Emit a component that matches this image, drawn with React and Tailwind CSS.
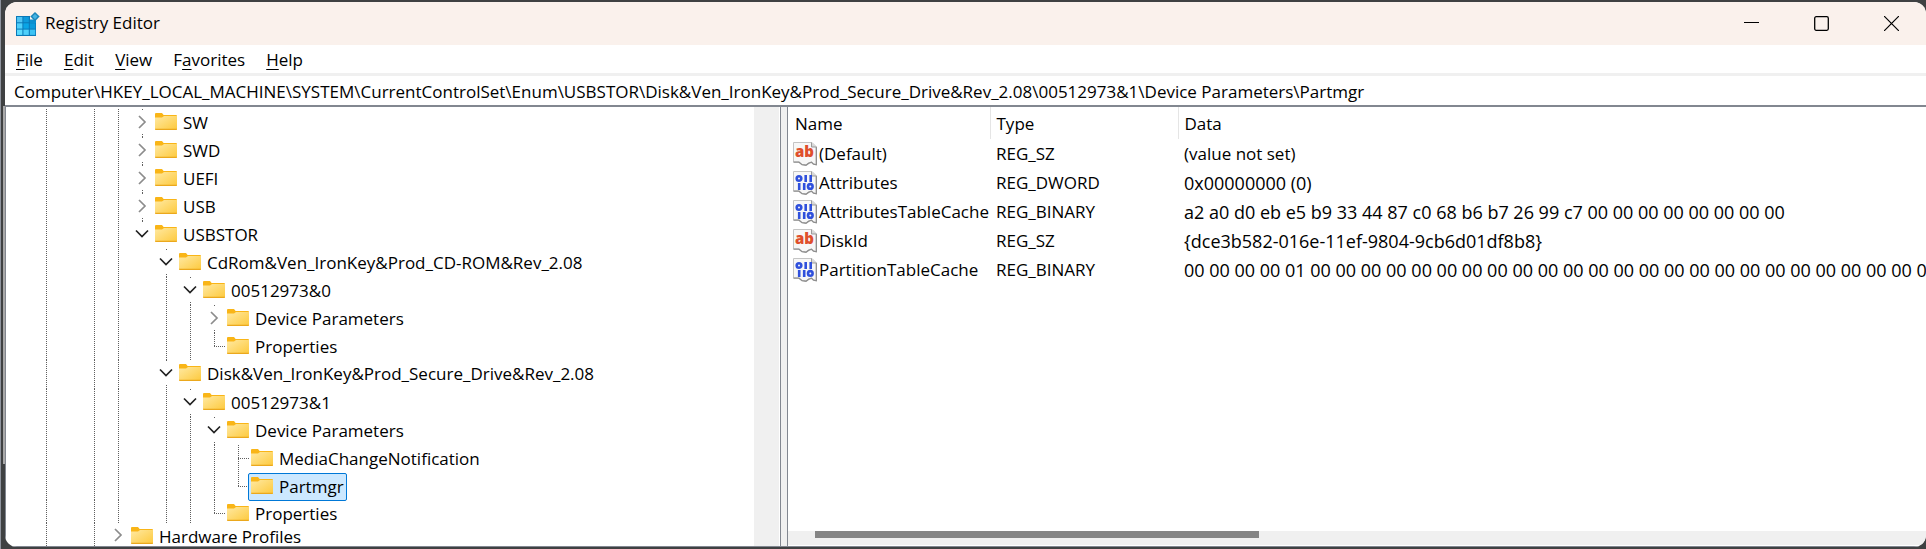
import React from "react";

const FULL = "h-7";

// guides: one character per indent column, "|" draws a dotted line, "." leaves it empty
const ROWS = [
  { label: "SW", guides: "|.||", state: "closed", size: FULL },
  { label: "SWD", guides: "|.||", state: "closed", size: FULL },
  { label: "UEFI", guides: "|.||", state: "closed", size: FULL },
  { label: "USB", guides: "|.||", state: "closed", size: FULL },
  { label: "USBSTOR", guides: "|.||", state: "open", end: true, size: FULL },
  { label: "CdRom&Ven_IronKey&Prod_CD-ROM&Rev_2.08", guides: "|.||.", state: "open", size: FULL },
  { label: "00512973&0", guides: "|.||.|", state: "open", size: FULL },
  { label: "Device Parameters", guides: "|.||.||", state: "closed", size: FULL },
  { label: "Properties", guides: "|.||.||", state: "leaf", end: true, size: "h-[27px]" },
  { label: "Disk&Ven_IronKey&Prod_Secure_Drive&Rev_2.08", guides: "|.||.", state: "open", size: "h-[29px]" },
  { label: "00512973&1", guides: "|.||.|", state: "open", size: FULL },
  { label: "Device Parameters", guides: "|.||.||", state: "open", size: FULL },
  { label: "MediaChangeNotification", guides: "|.||.|||", state: "leaf", size: FULL },
  { label: "Partmgr", guides: "|.||.|||", state: "leaf", end: true, selected: true, size: "h-[27px]" },
  { label: "Properties", guides: "|.||.||", state: "leaf", end: true, size: "h-[23px]" },
  { label: "Hardware Profiles", guides: "|.|", state: "closed", end: true, size: "h-[23px]" },
];

const VALUES = [
  { kind: "text", name: "(Default)", type: "REG_SZ", data: "(value not set)", unset: true },
  { kind: "binary", name: "Attributes", type: "REG_DWORD", data: "0x00000000 (0)" },
  {
    kind: "binary",
    name: "AttributesTableCache",
    type: "REG_BINARY",
    data: "a2 a0 d0 eb e5 b9 33 44 87 c0 68 b6 b7 26 99 c7 00 00 00 00 00 00 00 00",
  },
  { kind: "text", name: "DiskId", type: "REG_SZ", data: "{dce3b582-016e-11ef-9804-9cb6d01df8b8}" },
  {
    kind: "binary",
    name: "PartitionTableCache",
    type: "REG_BINARY",
    data: "00 00 00 00 01 00 00 00 00 00 00 00 00 00 00 00 00 00 00 00 00 00 00 00 00 00 00 00 00 00 00 00",
  },
];

const MENUS = [
  ["", "F", "ile"],
  ["", "E", "dit"],
  ["", "V", "iew"],
  ["F", "a", "vorites"],
  ["", "H", "elp"],
];

const DOTS_V = "w-px bg-[repeating-linear-gradient(to_bottom,#5f5f5f_0px,#5f5f5f_1px,transparent_1px,transparent_2px)]";
const DOTS_H = "h-px bg-[repeating-linear-gradient(to_right,#5f5f5f_0px,#5f5f5f_1px,transparent_1px,transparent_2px)]";

function AppIcon() {
  const tiles = [
    [0, 0, "#4fc4f3"], [1, 0, "#0f9bdc"], [2, 0, "#0b8fd0"],
    [0, 1, "#4fd0fb"], [1, 1, "#0aa5e6"], [2, 1, "#0a9adb"],
    [0, 2, "#5cdcff"], [1, 2, "#4fd0fb"], [2, 2, "#3cc3f4"],
  ];
  return (
    <svg width="24" height="24" viewBox="0 0 24 24" aria-hidden="true">
      <path d="M0 4h14v3h6v17H0z" fill="#0a79b8" />
      {tiles.map(([c, r, fill]) => (
        <rect key={`${c}${r}`} x={1 + c * 6.4} y={(c === 2 && r === 0 ? 6.5 : 5) + r * 6.3} width="5.4" height={c === 2 && r === 0 ? 3.8 : 5.3} fill={fill} />
      ))}
      <path d="M14 3h6v5h-6z" fill="#faf1ec" />
      <path d="M14 7.5h6v3.4h-6z" fill="#0b8fd0" />
      <path d="M19 0l4.7 4.6L19 9.2l-4.7-4.6z" fill="#1b86ba" />
      <path d="M19 2l2.6 2.6L19 7.2l-2.6-2.6z" fill="#46b4e4" />
    </svg>
  );
}

function Folder() {
  return (
    <svg className="mt-[3px] shrink-0" width="22" height="17" viewBox="0 0 22 17" aria-hidden="true">
      <defs>
        <linearGradient id="folder-face" x1="0" y1="0" x2="1" y2="1">
          <stop offset="0" stopColor="#ffe9a2" />
          <stop offset="1" stopColor="#fdc93c" />
        </linearGradient>
      </defs>
      <path d="M0 1a1 1 0 0 1 1-1h6l1.600 2H21a1 1 0 0 1 1 1v2H0z" fill="#f9b517" />
      <path d="M0 4.500h7L9 3h13v13a1 1 0 0 1-1 1H1a1 1 0 0 1-1-1z" fill="url(#folder-face)" />
      <path d="M0 15.800h22V16a1 1 0 0 1-1 1H1a1 1 0 0 1-1-1z" fill="#eba81d" />
    </svg>
  );
}

function Chevron({ open }) {
  return open ? (
    <svg width="14" height="10" viewBox="0 0 14 10" fill="none" stroke="#222" strokeWidth="1.700" aria-hidden="true">
      <path d="M1 1.500l6 6 6-6" />
    </svg>
  ) : (
    <svg width="10" height="14" viewBox="0 0 10 14" fill="none" stroke="#8c8c8c" strokeWidth="1.700" aria-hidden="true">
      <path d="M2 1l6 6-6 6" />
    </svg>
  );
}

function ValueIcon({ kind }) {
  return (
    <svg className="shrink-0" width="24" height="24" viewBox="0 0 24 24" aria-hidden="true">
      <path d="M.500.500H19L23.500 5v17.500l-3-.500-2-2-3 1-2.500 2-4-.500-3-2.500H.500z" fill="#f7f7f7" stroke="#c4c4c4" />
      <path d="M23.300 5v17.800l-2.800-.600-2-2-3 1.200-2.500 1.800-4-.500-3-2.500H.500" fill="none" stroke="#8e8e8e" strokeWidth="1.300" />
      <path d="M18.500.500V5h5" fill="#d8d8d8" stroke="#9b9b9b" />
      {kind === "text" ? (
        <text x="2" y="15" fontFamily="Open Sans, sans-serif" fontWeight="800" fontSize="15" fill="#df4f2c">ab</text>
      ) : (
        <g fill="none" stroke="#2f50dc" strokeWidth="2.600">
          <circle cx="6" cy="7.500" r="2.300" />
          <path d="M12.700 4v7M17.700 4v7M6.200 12v7M11.200 12v7" />
          <circle cx="17.300" cy="15.400" r="2.300" />
        </g>
      )}
    </svg>
  );
}

function Expander({ row }) {
  if (row.state === "leaf") {
    return (
      <span className="flex w-6 shrink-0 flex-col pl-3" aria-hidden="true">
        <span className={`${DOTS_V} h-[13px]`} />
        <span className={`${DOTS_H} w-full`} />
        {!row.end && <span className={`${DOTS_V} flex-1`} />}
      </span>
    );
  }
  return (
    <span className="flex w-6 shrink-0 flex-col items-center">
      <span className={`${DOTS_V} h-px`} />
      <button
        type="button"
        aria-label={`${row.state === "open" ? "Collapse" : "Expand"} ${row.label}`}
        className="flex h-6 w-6 shrink-0 items-center justify-center"
      >
        <Chevron open={row.state === "open"} />
      </button>
      {!row.end && <span className={`${DOTS_V} flex-1`} />}
    </span>
  );
}

function TreeRow({ row }) {
  return (
    <li
      role="treeitem"
      aria-selected={!!row.selected}
      aria-level={row.guides.length + 1}
      className={`flex shrink-0 items-stretch ${row.size}`}
    >
      {row.guides.split("").map((g, i) => (
        <span key={i} className="flex w-6 shrink-0 pl-3" aria-hidden="true">
          {g === "|" && <span className={DOTS_V} />}
        </span>
      ))}
      <Expander row={row} />
      <span
        className={`-ml-0.5 flex h-7 items-start gap-1.5 rounded-xs border pl-0.5 pr-0.5 leading-[26px] whitespace-nowrap ${
          row.selected ? "border-[#0078d7] bg-[#cce8ff]" : "border-transparent"
        }`}
      >
        <Folder />
        {row.label}
      </span>
    </li>
  );
}

export default function App() {
  return (
    <div className="flex h-screen overflow-hidden bg-[#3f4142] font-['Open_Sans',sans-serif] text-[17px] text-black">
      <div className="flex w-[5px] shrink-0" aria-hidden="true">
        <div className="w-px bg-[#8f949e]" />
        <div className="w-0.5" />
        <div className="mt-[106px] mb-[85px] w-0.5 bg-[#a9a9a9]" />
      </div>

      <div className="my-0.5 flex min-w-0 flex-1 flex-col overflow-hidden rounded-xl bg-white">
        <header className="flex h-[43px] shrink-0 items-center bg-[#faf1ec] pl-[11px]">
          <AppIcon />
          <h1 className="flex-1 pl-[5px] pb-0.5">Registry Editor</h1>
          <button type="button" aria-label="Minimize" className="flex h-full w-[70px] items-center justify-center">
            <svg width="15" height="15" viewBox="0 0 15 15" fill="none" stroke="#000"><path d="M0 6.500h15" /></svg>
          </button>
          <button type="button" aria-label="Maximize" className="flex h-full w-[70px] items-center justify-center">
            <svg width="15" height="15" viewBox="0 0 15 15" fill="none" stroke="#000" strokeWidth="1.300"><rect x=".700" y=".700" width="13.600" height="13.600" rx="1.500" /></svg>
          </button>
          <button type="button" aria-label="Close" className="flex h-full w-[70px] items-center justify-center">
            <svg width="15" height="15" viewBox="0 0 15 15" fill="none" stroke="#000" strokeWidth="1.200"><path d="M0 0l15 15M15 0L0 15" /></svg>
          </button>
        </header>

        <nav aria-label="Menu" className="flex h-7 shrink-0 items-center gap-[21px] pt-0.5 pl-[11px]">
          {MENUS.map(([before, key, after]) => (
            <button key={key} type="button">
              {before}
              <span className="underline decoration-1 underline-offset-3">{key}</span>
              {after}
            </button>
          ))}
        </nav>

        <div className="shrink-0 border-t-[3px] border-b-2 border-t-[#f0f0f0] border-b-[#828790]">
          <input
            type="text"
            aria-label="Address"
            readOnly
            value={"Computer\\HKEY_LOCAL_MACHINE\\SYSTEM\\CurrentControlSet\\Enum\\USBSTOR\\Disk&Ven_IronKey&Prod_Secure_Drive&Rev_2.08\\00512973&1\\Device Parameters\\Partmgr"}
            className="block h-[29px] w-full bg-white pt-0.5 pl-[9px] outline-none"
          />
        </div>

        <main className="flex min-h-0 flex-1 border-b border-l border-[#828790]">
          <section className="flex w-[775px] shrink-0 border-r border-[#828790]">
            <ul role="tree" aria-label="Registry keys" className="flex min-w-0 flex-1 flex-col overflow-hidden pt-0.5 pl-7">
              {ROWS.map((row, i) => (
                <TreeRow key={i} row={row} />
              ))}
            </ul>
            <div className="mr-px w-[25px] shrink-0 bg-[#f0f0f0]" />
          </section>

          <div className="w-1.5 shrink-0 bg-[#f0f0f0]" />

          <section className="flex min-w-0 flex-1 flex-col border-l border-[#828790]">
            <div className="min-h-0 flex-1 overflow-hidden">
              <table className="w-full table-fixed border-collapse text-left whitespace-nowrap">
                <thead>
                  <tr className="h-8">
                    <th scope="col" className="w-[202px] border-r border-[#e5e5e5] pt-0.5 pl-[7px] font-normal">Name</th>
                    <th scope="col" className="w-[188px] border-r border-[#e5e5e5] pt-0.5 pl-1.5 font-normal">Type</th>
                    <th scope="col" className="pt-0.5 pl-1.5 font-normal">Data</th>
                  </tr>
                </thead>
                <tbody>
                  {VALUES.map((v) => (
                    <tr key={v.name} className="h-[29px]">
                      <td className="p-0 pl-[5px]">
                        <span className="flex items-center gap-0.5">
                          <ValueIcon kind={v.kind} />
                          {v.name}
                        </span>
                      </td>
                      <td className="p-0 pl-1.5">{v.type}</td>
                      <td className={`overflow-hidden p-0 pl-1.5 leading-6 ${v.unset ? "text-[17px]" : "text-[18px]"}`}>{v.data}</td>
                    </tr>
                  ))}
                </tbody>
              </table>
            </div>
            <div className="mb-px flex h-[14px] shrink-0 items-start bg-[#f0f0f0] pl-[27px]">
              <div className="h-[7px] w-2/5 bg-[#858585]" />
            </div>
          </section>
        </main>
      </div>
    </div>
  );
}
